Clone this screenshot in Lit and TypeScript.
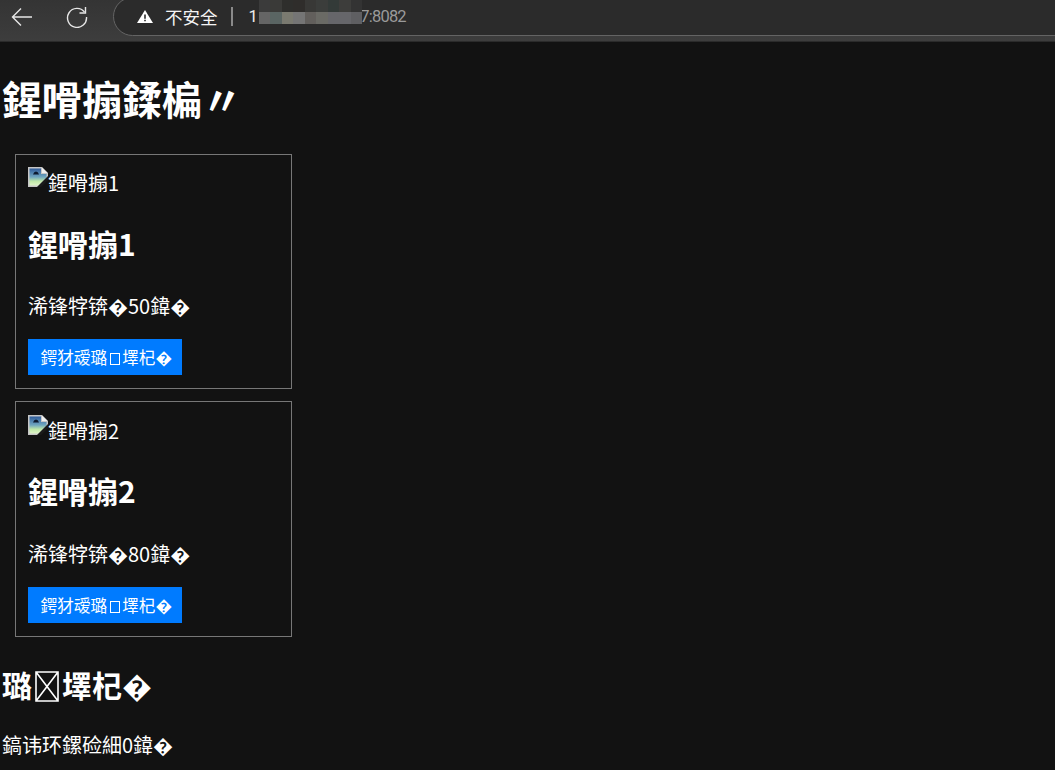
import { LitElement, html, css } from "lit";
import { customElement } from "lit/decorators.js";

const mosTop = ["#3b3b3b","#3a3a38","#2e2e2c","#2f2d2b","#383836","#3b3d3b","#333a38","#3d3d3b","#333333"];
const mosBottom = ["#656565","#5a6563","#7a7a70","#757575","#625f5c","#6a6a65","#66666a","#66666a","#5f5f62"];

@customElement("app-root")
export class AppRoot extends LitElement {
  static styles = css`
    :host { display: block; width: 1055px; height: 770px; overflow: hidden; background: #121212; color: #fff;
      font-family: "Noto Sans CJK SC", "Noto Sans", sans-serif; font-size: 20px; line-height: 1.45; }
    .bar { height: 42px; background: linear-gradient(#343434, #3d3d3d); display: flex; align-items: flex-start; box-sizing: border-box; overflow: hidden; border-bottom: 1px solid #2b2b2b; }
    .nav { width: 22px; height: 22px; margin-top: 6px; flex: none; }
    .back { margin-left: 11px; }
    .reload { margin-left: 33px; }
    .pill { margin: -3px -30px 0 25px; flex: 1; height: 39px; box-sizing: border-box; border: 1.5px solid #646464; border-radius: 20px; background: #2b2b2b; display: flex; align-items: center; padding: 0 0 0 23px; font-size: 17.5px; }
    .warn { width: 16px; height: 13px; margin-right: 12px; flex: none; }
    .sec { color: #f4f4f4; line-height: 1; }
    .sep { width: 2px; height: 19px; background: #8a8a8a; margin: 0 16px 0 13px; }
    .url { font-family: Roboto, "Liberation Sans", sans-serif; color: #ededed; font-size: 16.5px; display: flex; align-items: center; height: 33px; }
    .mos { display: grid; grid-template-columns: repeat(9, 11.5px); grid-template-rows: 12px 12px; margin: -9px 0 0 1px; position: relative; z-index: 1; }
    .mos i { display: block; }
    .port { color: #9a9a9a; margin-left: -2px; letter-spacing: -0.8px; }
    main { padding: 0 2px; }
    h1 { font-size: 40px; font-weight: 700; line-height: 56px; margin: 28px 0 27.75px; }
    .card { border: 1px solid #777; width: 277px; box-sizing: border-box; margin: 0 0 12px 13px; padding: 12.5px 12px; height: 235.5px; }
    .alt { display: flex; align-items: flex-start; height: 30px; line-height: 30px; }
    .alt svg { width: 20px; height: 20px; flex: none; }
    .alt span { position: relative; top: 1px; }
    h3 { font-size: 30px; font-weight: 700; line-height: 42px; margin: 24.5px 0 27.25px; }
    h2 { font-size: 30px; font-weight: 700; line-height: 42px; margin: 26.25px 0 0; }
    p { margin: 0; line-height: 29px; }
    .card p { margin-bottom: 19.25px; }
    button { display: block; background: #007bff; color: #fff; border: none; padding: 0 12.5px; height: 36px; font: inherit; font-size: 16.67px; line-height: 36px; width: 154px; white-space: nowrap; text-align: left; }
    .total { margin-top: 25px; }
    .tofu { display: inline-block; vertical-align: -5px; width: 24px; height: 31px; margin: 0 3px; }
    .tiny { display: inline-block; width: 10px; height: 12px; border: 1px solid #fff; box-sizing: border-box; margin: 0 2px 0 3px; vertical-align: -1px; }
  `;

  product(n: number, price: number) {
    return html`<div class="card">
      <div class="alt">
        <svg viewBox="0 0 20 20">
          <defs>
            <linearGradient id="sky" x1="0" y1="0" x2="0" y2="1">
              <stop offset="0" stop-color="#2f5b9a"/>
              <stop offset="0.5" stop-color="#6fa6c0"/>
              <stop offset="0.75" stop-color="#bfe8a8"/>
              <stop offset="1" stop-color="#dff5c8"/>
            </linearGradient>
          </defs>
          <path d="M0 0H14L20 6V11L11 20H0Z" fill="#c6c6c6"/>
          <path d="M14 0.5V6H19.5Z" fill="#f0f0f0"/>
          <path d="M1.5 1.5H13V7H18.5V10.5L10.5 18.5H1.5Z" fill="url(#sky)"/>
          <path d="M5 7.5Q6 4.5 8 4.5Q10 4.5 11 7.5Z" fill="#0c1a30"/>
          <path d="M9 20L20 9V13L13 20Z" fill="#1a1a1a"/>
        </svg>
        <span>鍟嗗搧${n}</span>
      </div>
      <h3>鍟嗗搧${n}</h3>
      <p>浠锋牸锛�${price}鍏�</p>
      <button>鍔犲叆璐<span class="tiny"></span>墿杞�</button>
    </div>`;
  }

  render() {
    return html`
      <div class="bar">
        <svg class="nav back" viewBox="0 0 22 22" fill="none" stroke="#e6e6e6" stroke-width="1.4"><path d="M21 11H1.5M10 2.5L1.5 11L10 19.5"/></svg>
        <svg class="nav reload" viewBox="0 0 22 22" fill="none" stroke="#e6e6e6" stroke-width="1.4"><path d="M18.5 6A9.5 9.5 0 1 0 20.5 11"/><path d="M19.5 1V7H13.5"/></svg>
        <div class="pill">
          <svg class="warn" viewBox="0 0 16 13"><path d="M8 0L16 13H0Z" fill="#fff"/><path d="M7.2 4.5H8.8V8.8H7.2ZM7.2 9.8H8.8V11.3H7.2Z" fill="#2b2b2b"/></svg>
          <span class="sec">不安全</span>
          <span class="sep"></span>
          <span class="url">1<span class="mos">${mosTop.map((c) => html`<i style="background:${c}"></i>`)}${mosBottom.map((c) => html`<i style="background:${c}"></i>`)}</span><span class="port">7:8082</span></span>
        </div>
      </div>
      <main>
        <h1>鍟嗗搧鍒楄〃</h1>
        ${this.product(1, 50)}
        ${this.product(2, 80)}
        <h2>璐<svg class="tofu" viewBox="0 0 24 31" fill="none" stroke="#fff" stroke-width="1.6"><path d="M1 1H23V30H1ZM1 1L23 30M23 1L1 30"/></svg>墿杞�</h2>
        <p class="total">鎬讳环鏍硷細0鍏�</p>
      </main>
    `;
  }
}
